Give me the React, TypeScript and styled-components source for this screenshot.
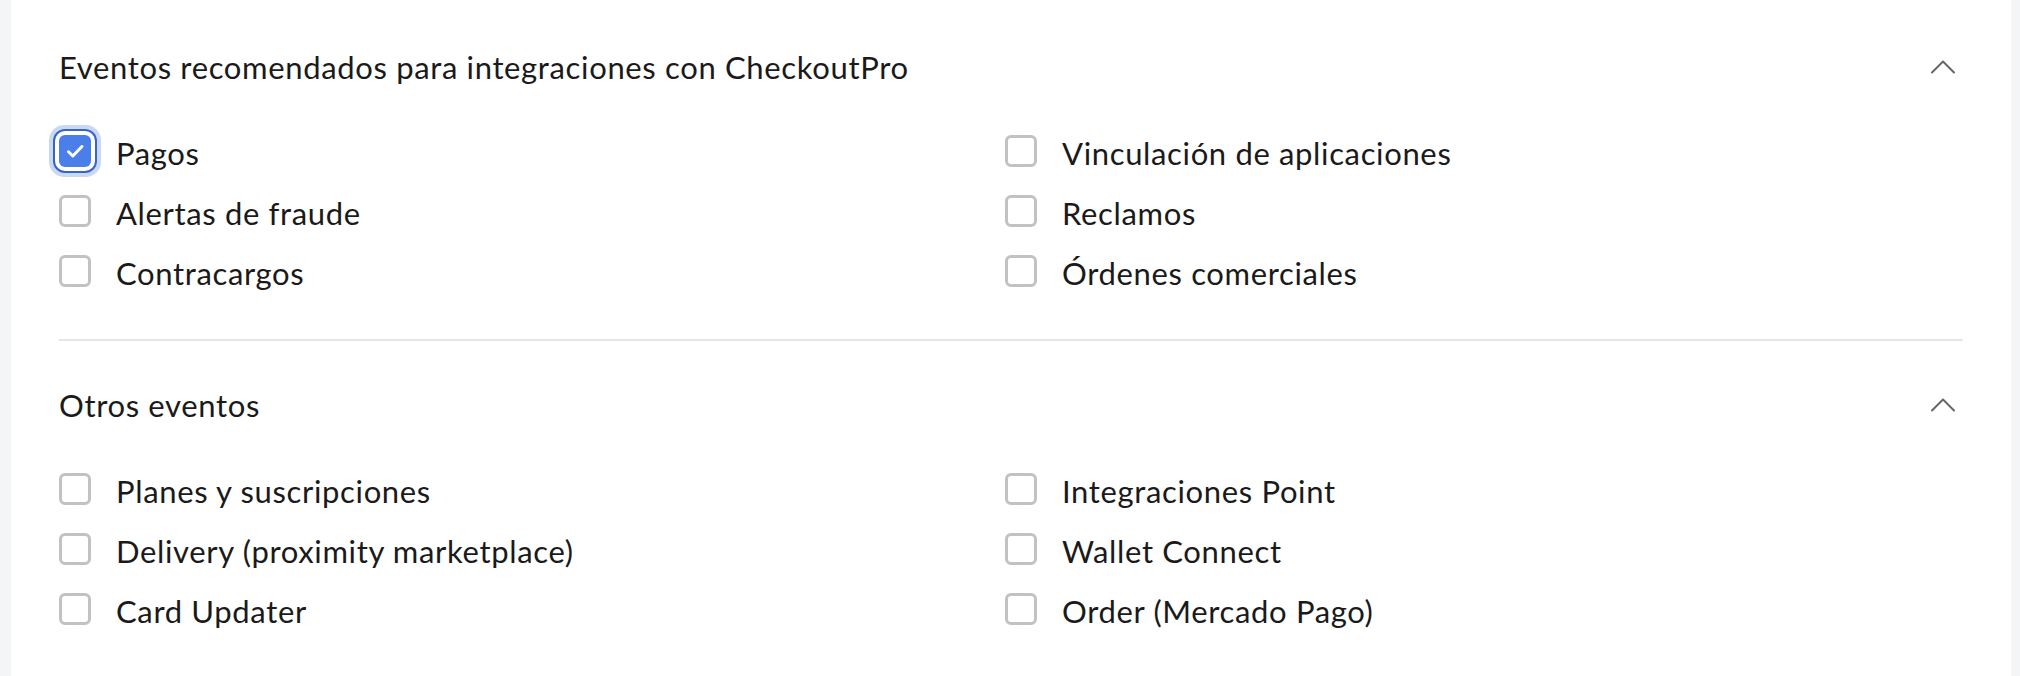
import React from "react";
import styled, { createGlobalStyle } from "styled-components";

const GlobalStyle = createGlobalStyle`
  html, body {
    margin: 0;
    padding: 0;
    background: #f4f5f7;
  }
  body {
    font-family: Lato, "Open Sans", "Liberation Sans", sans-serif;
    color: #1a1a1a;
    -webkit-font-smoothing: antialiased;
  }
`;

const Page = styled.div`
  display: flex;
  height: 676px;
  padding: 0 9px 0 11px;
  overflow: hidden;
`;

const Card = styled.div`
  flex: 1;
  background: #ffffff;
  padding: 47px 48px 0 48px;
  display: flex;
  flex-direction: column;
`;

const Section = styled.section`
  display: flex;
  flex-direction: column;
  gap: 48px;
`;

const Header = styled.div`
  display: flex;
  align-items: center;
  justify-content: space-between;
  height: 40px;
`;

const Title = styled.h2`
  margin: 0;
  font-size: 31px;
  letter-spacing: 0.65px;
  font-weight: 400;
  color: #1a1a1a;
`;

const ChevronButton = styled.button`
  border: 0;
  background: transparent;
  padding: 0;
  margin-right: 4px;
  width: 32px;
  height: 32px;
  display: flex;
  align-items: center;
  justify-content: center;
  cursor: pointer;
`;

const Grid = styled.div`
  display: grid;
  grid-template-columns: 946px 1fr;
  row-gap: 28px;
`;

const Option = styled.label`
  display: flex;
  align-items: center;
  gap: 25px;
  height: 32px;
  font-size: 31px;
  letter-spacing: 0.65px;
  color: #1a1a1a;
  cursor: pointer;
`;

const OptionText = styled.span`
  padding-top: 3px;
`;

const Box = styled.span<{ $checked?: boolean }>`
  box-sizing: border-box;
  width: 32px;
  height: 32px;
  flex: 0 0 32px;
  border-radius: 6px;
  display: flex;
  align-items: center;
  justify-content: center;
  border: ${(p) => (p.$checked ? "none" : "3px solid #c2c2c2")};
  background: ${(p) => (p.$checked ? "#4a7ee9" : "#ffffff")};
  box-shadow: ${(p) =>
    p.$checked
      ? "0 0 0 4px #ffffff, 0 0 0 6px #3a63c4, 0 0 0 10px #c9d9f5"
      : "none"};
`;

const Divider = styled.hr`
  border: 0;
  height: 2px;
  background: #e6e6e6;
  margin: 52px 0 44px 0;
`;

const Chevron = () => (
  <svg width="32" height="32" viewBox="0 0 32 32" fill="none">
    <path
      d="M5 21.5 L16 10.5 L27 21.5"
      stroke="#666666"
      strokeWidth="2"
      strokeLinecap="round"
      strokeLinejoin="round"
    />
  </svg>
);

const Check = () => (
  <svg width="32" height="32" viewBox="0 0 32 32" fill="none">
    <path
      d="M9.5 16.8 L13.8 21 L23 11.5"
      stroke="#ffffff"
      strokeWidth="3"
      strokeLinecap="round"
      strokeLinejoin="round"
    />
  </svg>
);

type Item = { label: string; checked?: boolean };

const CheckItem = ({ label, checked }: Item) => (
  <Option>
    <Box $checked={checked}>{checked && <Check />}</Box>
    <OptionText>{label}</OptionText>
  </Option>
);

const EventSection = ({ title, items }: { title: string; items: Item[] }) => (
  <Section>
    <Header>
      <Title>{title}</Title>
      <ChevronButton aria-label="Contraer">
        <Chevron />
      </ChevronButton>
    </Header>
    <Grid>
      {items.map((it) => (
        <CheckItem key={it.label} {...it} />
      ))}
    </Grid>
  </Section>
);

const recommended: Item[] = [
  { label: "Pagos", checked: true },
  { label: "Vinculación de aplicaciones" },
  { label: "Alertas de fraude" },
  { label: "Reclamos" },
  { label: "Contracargos" },
  { label: "Órdenes comerciales" },
];

const others: Item[] = [
  { label: "Planes y suscripciones" },
  { label: "Integraciones Point" },
  { label: "Delivery (proximity marketplace)" },
  { label: "Wallet Connect" },
  { label: "Card Updater" },
  { label: "Order (Mercado Pago)" },
];

export default function App() {
  return (
    <>
      <GlobalStyle />
      <Page>
        <Card>
          <EventSection
            title="Eventos recomendados para integraciones con CheckoutPro"
            items={recommended}
          />
          <Divider />
          <EventSection title="Otros eventos" items={others} />
        </Card>
      </Page>
    </>
  );
}
